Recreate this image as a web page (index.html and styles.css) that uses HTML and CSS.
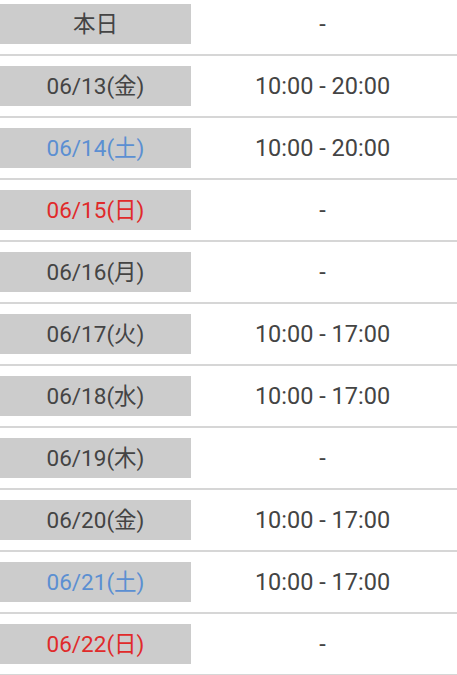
FILE: index.html
```html
<!DOCTYPE html>
<html lang="ja">
<head>
<meta charset="utf-8">
<link rel="stylesheet" href="styles.css">
</head>
<body>
<div class="schedule">
  <div class="row"><div class="day">本日</div><div class="hours">-</div></div>
  <div class="row"><div class="day">06/13(金)</div><div class="hours">10:00 - 20:00</div></div>
  <div class="row"><div class="day sat">06/14(土)</div><div class="hours">10:00 - 20:00</div></div>
  <div class="row"><div class="day sun">06/15(日)</div><div class="hours">-</div></div>
  <div class="row"><div class="day">06/16(月)</div><div class="hours">-</div></div>
  <div class="row"><div class="day">06/17(火)</div><div class="hours">10:00 - 17:00</div></div>
  <div class="row"><div class="day">06/18(水)</div><div class="hours">10:00 - 17:00</div></div>
  <div class="row"><div class="day">06/19(木)</div><div class="hours">-</div></div>
  <div class="row"><div class="day">06/20(金)</div><div class="hours">10:00 - 17:00</div></div>
  <div class="row"><div class="day sat">06/21(土)</div><div class="hours">10:00 - 17:00</div></div>
  <div class="row"><div class="day sun">06/22(日)</div><div class="hours">-</div></div>
</div>
</body>
</html>
```
FILE: styles.css
```css
html, body {
  margin: 0;
  padding: 0;
  background: #ffffff;
  overflow: hidden;
}
body {
  font-family: Roboto, "Noto Sans CJK JP", sans-serif;
  color: #444444;
}
.schedule {
  margin-top: -6px;
}
.row {
  display: flex;
  align-items: center;
  padding: 10px 0;
  border-bottom: 2px solid #d6d6d6;
}
.day {
  width: 191px;
  height: 40px;
  flex: none;
  background: #cccccc;
  display: flex;
  align-items: center;
  justify-content: center;
  font-size: 22.5px;
  line-height: 1;
  padding-top: 1px;
  box-sizing: border-box;
  color: #444444;
}
.day.sat {
  color: #5b8fd2;
}
.day.sun {
  color: #e02a2a;
}
.hours {
  flex: 1;
  text-align: center;
  font-size: 23.5px;
  color: #444444;
  padding-right: 3px;
}
```
